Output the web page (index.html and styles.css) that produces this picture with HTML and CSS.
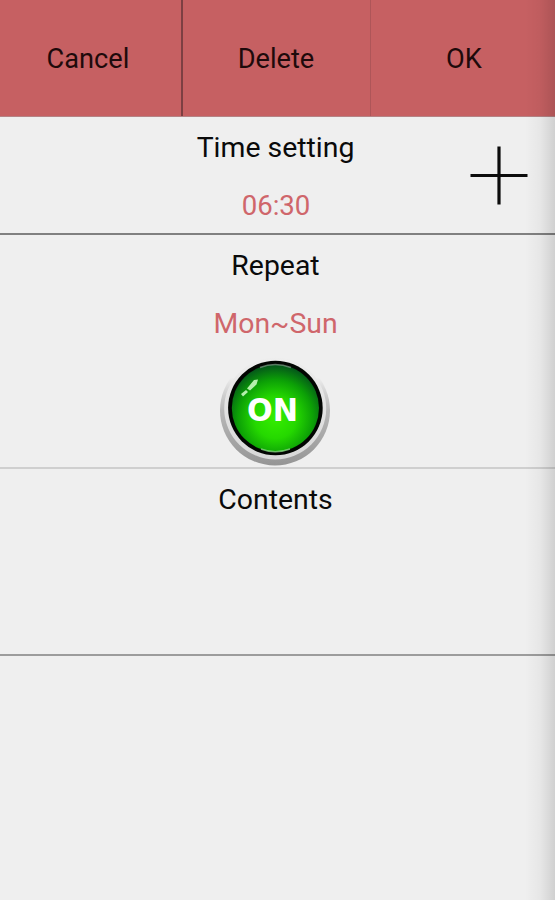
FILE: index.html
```
<!DOCTYPE html>
<html>
<head>
    <meta charset="UTF-8">
    <title>Time setting</title>
    <link rel="stylesheet" href="styles.css">
</head>
<body>
    <div class="toolbar">
        <button type="button" class="cancel">Cancel</button>
        <button type="button" class="delete">Delete</button>
        <button type="button" class="ok">OK</button>
    </div>

    <div class="section time">
        <div class="title">Time setting</div>
        <div class="value hour">06:30</div>
        <svg class="plus" width="60" height="60" viewBox="0 0 60 60">
            <path d="M1.5 30.5H58.5M30 1.5V59.5" stroke="#0c0c0c" stroke-width="3.2"/>
        </svg>
    </div>

    <div class="section repeat">
        <div class="title">Repeat</div>
        <div class="value days">Mon~Sun</div>
        <svg class="switch" width="116" height="116" viewBox="0 0 116 116">
            <defs>
                <linearGradient id="base" x1="0" y1="0" x2="0" y2="1">
                    <stop offset="0.2" stop-color="#aaa" stop-opacity="0"/>
                    <stop offset="0.5" stop-color="#b8b8b8"/>
                    <stop offset="1" stop-color="#959595"/>
                </linearGradient>
                <linearGradient id="ring" x1="0" y1="0" x2="0" y2="1">
                    <stop offset="0" stop-color="#eee"/>
                    <stop offset="0.5" stop-color="#e2e2e2"/>
                    <stop offset="1" stop-color="#d8d8d8"/>
                </linearGradient>
                <radialGradient id="green" cx="0.5" cy="0.61" r="0.6">
                    <stop offset="0" stop-color="#35ee00"/>
                    <stop offset="0.4" stop-color="#25d800"/>
                    <stop offset="0.72" stop-color="#0ca006"/>
                    <stop offset="1" stop-color="#04561a"/>
                </radialGradient>
            </defs>
            <circle cx="58" cy="59.5" r="55" fill="url(#base)"/>
            <circle cx="58.2" cy="57.5" r="51" fill="url(#ring)"/>
            <circle cx="58.4" cy="57" r="47.3" fill="#020502"/>
            <circle cx="58.4" cy="57" r="43.6" fill="url(#green)"/>
            <path d="M43 16.5Q58 10.5 74 16.5" fill="none" stroke="#7d9984" stroke-width="1.4" opacity="0.7"/>
            <path d="M44 98Q58 103.5 73 98" fill="none" stroke="#8fe08a" stroke-width="1.4" opacity="0.75"/>
            <path d="M24 43L29 39L31 41L26 45.5ZM30 37.5L37 29L41 28.5L39.5 33.5L33 39.5Z" fill="#b4efac"/>
            <text x="55.5" y="70" text-anchor="middle" textLength="51" lengthAdjust="spacingAndGlyphs" class="state">ON</text>
        </svg>
    </div>

    <div class="section contents">
        <div class="title">Contents</div>
    </div>

    <div class="shade"></div>
</body>
</html>
```
FILE: styles.css
```
body {
    margin: 0;
    height: 900px;
    overflow: hidden;
    background-color: #efefef;
    font-family: Roboto, sans-serif;
    font-size: 28.4px;
    color: #0a0a0a;
}

.toolbar {
    display: grid;
    grid-template-columns: 183px 188px 184px;
    height: 117px;
    box-sizing: border-box;
    background-color: #c66062;
    border-bottom: 1px solid #b58385;
}

.toolbar button {
    border: 0;
    padding: 2px 0 0 2px;
    background: none;
    font: inherit;
    font-size: 27.2px;
    color: #1e0a0b;
    text-align: center;
}

.toolbar .cancel {
    padding: 2px 5px 0 0;
    border-right: 2px solid #7d3f42;
}

.toolbar .delete {
    padding: 2px 1px 0 0;
    border-right: 1px solid #ae5558;
}

.section {
    position: relative;
    box-sizing: border-box;
    text-align: center;
}

.title,
.value {
    height: 58px;
    line-height: 62px;
    padding-right: 4px;
}

.value {
    color: #cf666b;
}

.time {
    height: 118px;
    border-bottom: 2px solid #808080;
}

.hour {
    font-size: 27.6px;
    padding-right: 3px;
}

.repeat {
    height: 234px;
    border-bottom: 2px solid #cfcfcf;
}

.contents {
    height: 187px;
    border-bottom: 2px solid #9c9c9c;
}

.plus {
    position: absolute;
    left: 469px;
    top: 28px;
}

.switch {
    display: block;
    margin: 0 auto 0 217px;
}

.state {
    font-family: "DejaVu Sans", sans-serif;
    font-size: 32px;
    font-weight: bold;
    fill: #fff;
}

/* sombra del borde derecho */
.shade {
    position: absolute;
    top: 0;
    right: 0;
    width: 30px;
    height: 900px;
    background: linear-gradient(to right, rgba(0, 0, 0, 0), rgba(0, 0, 0, 0.035) 50%, rgba(0, 0, 0, 0.13));
}
```
